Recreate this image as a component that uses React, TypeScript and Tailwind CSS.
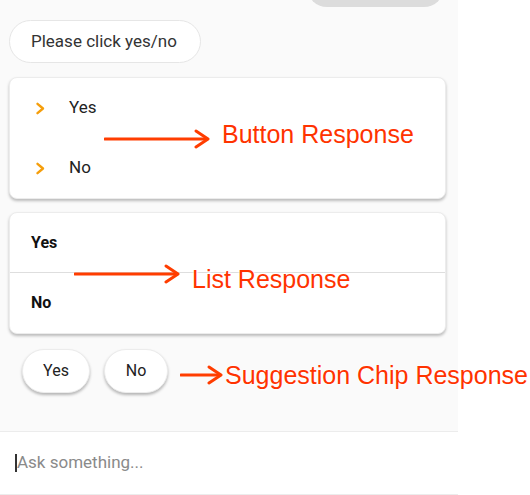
import React from "react";

const Chevron = () => (
  <svg width="11" height="13" viewBox="0 0 11 13" className="shrink-0">
    <path d="M2.5 1.8 L8 6.5 L2.5 11.2" fill="none" stroke="#f59e0b" strokeWidth="2.4" strokeLinecap="round" strokeLinejoin="round" />
  </svg>
);

const Arrow = ({ width }: { width: number }) => (
  <svg width={width} height="20" viewBox={`0 0 ${width} 20`} className="block">
    <path d={`M1 10 H${width - 3}`} stroke="#ff3d00" strokeWidth="3" strokeLinecap="round" />
    <path d={`M${width - 14} 2 L${width - 2} 10 L${width - 14} 18`} fill="none" stroke="#ff3d00" strokeWidth="3" strokeLinecap="round" strokeLinejoin="round" />
  </svg>
);

const label =
  "absolute text-[25px] leading-none text-[#ff3300] whitespace-nowrap [text-shadow:0_0_2px_#fff,0_0_3px_#fff,1px_1px_2px_#fff]";

export default function App() {
  return (
    <div className="relative w-[530px] h-[495px] overflow-hidden bg-white" style={{ fontFamily: "Roboto, 'Liberation Sans', sans-serif" }}>
      <div className="w-[458px] h-[495px] bg-[#fafafa] flex flex-col">
        <div className="flex justify-end pr-[14px]">
          <div className="w-[137px] h-[40px] -mt-[33px] rounded-[20px] bg-[#dcdcdc]" />
        </div>
        <div className="pl-[9px] mt-[13px]">
          <div className="inline-flex items-center h-[43px] pl-[21px] pr-[23px] rounded-full bg-white border border-[#e6e6e6] text-[17px] text-[#333]">
            Please click yes/no
          </div>
        </div>
        <div className="mx-[9px] mt-[14px] w-[437px] h-[122px] bg-white rounded-[8px] border border-[#ececec] shadow-[0_2px_3px_rgba(0,0,0,0.25)] flex flex-col justify-center">
          <div className="h-[60px] flex items-center pl-[25px] text-[17px] text-[#222]">
            <Chevron />
            <span className="ml-[23px]">Yes</span>
          </div>
          <div className="h-[60px] flex items-center pl-[25px] text-[17px] text-[#222]">
            <Chevron />
            <span className="ml-[23px]">No</span>
          </div>
        </div>
        <div className="mx-[9px] mt-[13px] w-[437px] h-[122px] bg-white rounded-[8px] border border-[#ececec] shadow-[0_2px_3px_rgba(0,0,0,0.25)] flex flex-col justify-center">
          <div className="h-[60px] flex items-center pl-[21px] text-[16px] font-bold text-[#111] border-b border-[#dedede]">Yes</div>
          <div className="h-[60px] flex items-center pl-[21px] text-[16px] font-bold text-[#111]">No</div>
        </div>
        <div className="flex gap-[14px] pl-[22px] mt-[15px]">
          <div className="w-[68px] h-[44px] rounded-full bg-white border border-[#ececec] shadow-[0_2px_3px_rgba(0,0,0,0.28)] flex items-center justify-center text-[16px] text-[#222]">Yes</div>
          <div className="w-[64px] h-[44px] rounded-full bg-white border border-[#ececec] shadow-[0_2px_3px_rgba(0,0,0,0.28)] flex items-center justify-center text-[16px] text-[#222]">No</div>
        </div>
        <div className="mt-auto h-[64px] bg-white border-t border-b border-[#ececec] flex items-center pl-[15px]">
          <div className="w-[2px] h-[18px] bg-[#333]" />
          <span className="text-[17px] text-[#8a8a8a]">Ask something...</span>
        </div>
      </div>

      <div className="absolute inset-0" style={{ fontFamily: "'Liberation Sans', Arial, sans-serif" }}>
        <div className="absolute left-[104px] top-[129px]"><Arrow width={106} /></div>
        <span className={`${label} left-[222px] top-[122px]`}>Button Response</span>
        <div className="absolute left-[74px] top-[264px]"><Arrow width={106} /></div>
        <span className={`${label} left-[192px] top-[267px]`}>List Response</span>
        <div className="absolute left-[180px] top-[365px]"><Arrow width={43} /></div>
        <span className={`${label} left-[225px] top-[363px]`}>Suggestion Chip Response</span>
      </div>
    </div>
  );
}
